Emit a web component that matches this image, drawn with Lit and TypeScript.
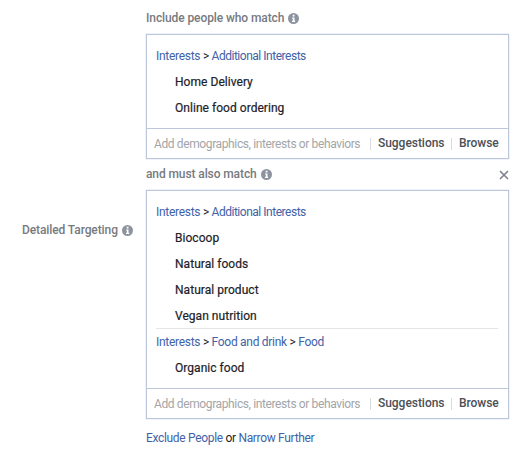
import { LitElement, html, css, svg } from "lit";
import { customElement, property } from "lit/decorators.js";

interface Group {
  path: string[];
  items: string[];
}

@customElement("info-icon")
class InfoIcon extends LitElement {
  static styles = css`
    :host { display: inline-flex; flex: none; width: 11px; height: 11px; }
    svg { display: block; width: 11px; height: 11px; }
  `;
  render() {
    return html`<svg viewBox="0 0 11 11">
      ${svg`<circle cx="5.5" cy="5.5" r="5.5" fill="#8e949f"/>
      <path d="M4.7 1.8h1.8v1.6H4.7zM4.1 4.5h2.4v3.3h.7v1.1H4V7.8h.8V5.6h-.7z" fill="#fff"/>`}
    </svg>`;
  }
}

@customElement("targeting-box")
class TargetingBox extends LitElement {
  @property({ attribute: false }) groups: Group[] = [];

  static styles = css`
    :host {
      display: block;
      box-sizing: border-box;
      border: 1px solid #bdc7dc;
      box-shadow: 0 0 0 0.5px #dfe5f0;
      color: #1d2129;
    }
    .groups { padding: 8px 10px 7px 9px; }
    .group + .group { border-top: 1px solid #e4e5e7; margin-top: -1px; }
    .row { height: 26px; line-height: 26px; white-space: nowrap; }
    .path { letter-spacing: -0.29px; }
    .item { padding-left: 19px; letter-spacing: 0.04px; -webkit-text-stroke: 0.2px currentColor; }
    .link { color: #4162a8; }
    .tight { letter-spacing: -0.48px; }
    .footer {
      display: flex;
      align-items: center;
      height: 30px;
      border-top: 1px solid #bdc7dc;
      padding-left: 7px;
      white-space: nowrap;
    }
    .hint { width: 216px; color: #a3a5a8; letter-spacing: -0.38px; }
    .action {
      border-left: 1px solid #d9dadc;
      height: 12px;
      line-height: 10px;
      padding-left: 7px;
      font-weight: 500;
      letter-spacing: -0.04px;
      color: #4b4f56;
    }
    .suggest { width: 73px; }
  `;
  render() {
    return html`
      <div class="groups">
        ${this.groups.map(
          (g) => html`<div class="group">
            <div class="row path">${g.path.map(
              (p, i) => html`${i ? " > " : ""}<span class="link ${p.length > 16 ? "tight" : ""}">${p}</span>`
            )}</div>
            ${g.items.map((t) => html`<div class="row item">${t}</div>`)}
          </div>`
        )}
      </div>
      <div class="footer">
        <span class="hint">Add demographics, interests or behaviors</span>
        <span class="action suggest">Suggestions</span>
        <span class="action">Browse</span>
      </div>
    `;
  }
}

@customElement("app-root")
class AppRoot extends LitElement {
  static styles = css`
    :host {
      display: grid;
      grid-template-columns: 146px 363px;
      box-sizing: border-box;
      height: 452px;
      overflow: hidden;
      background: #fff;
      font: 12px/16px Roboto, "Liberation Sans", sans-serif;
      color: #1d2129;
    }
    .side { padding-top: 222px; padding-left: 22px; }
    .label {
      display: flex;
      align-items: center;
      gap: 4px;
      height: 16px;
      font-weight: 500;
      letter-spacing: -0.1px;
      color: #777a80;
      white-space: nowrap;
    }
    .main { padding-top: 10px; }
    .first { margin-top: 8px; height: 125px; }
    .second { margin-top: 8px; height: 229px; }
    .match { display: flex; justify-content: space-between; align-items: center; margin-top: 7px; height: 16px; }
    .close { display: block; width: 10px; height: 10px; margin-top: 2px; }
    .links { margin-top: 11px; letter-spacing: -0.32px; }
    .link { color: #4162a8; }
  `;
  render() {
    return html`
      <div class="side"><div class="label"><span>Detailed Targeting</span><info-icon></info-icon></div></div>
      <div class="main">
        <div class="label"><span>Include people who match</span><info-icon></info-icon></div>
        <targeting-box class="first" .groups=${[
          { path: ["Interests", "Additional Interests"], items: ["Home Delivery", "Online food ordering"] },
        ]}></targeting-box>
        <div class="match">
          <div class="label"><span>and must also match</span><info-icon></info-icon></div>
          <svg class="close" viewBox="0 0 10 10"><path d="M1 1l8 8M9 1L1 9" stroke="#7c818b" stroke-width="1.6" fill="none"/></svg>
        </div>
        <targeting-box class="second" .groups=${[
          { path: ["Interests", "Additional Interests"], items: ["Biocoop", "Natural foods", "Natural product", "Vegan nutrition"] },
          { path: ["Interests", "Food and drink", "Food"], items: ["Organic food"] },
        ]}></targeting-box>
        <div class="links"><span class="link">Exclude People</span> or <span class="link">Narrow Further</span></div>
      </div>
    `;
  }
}
